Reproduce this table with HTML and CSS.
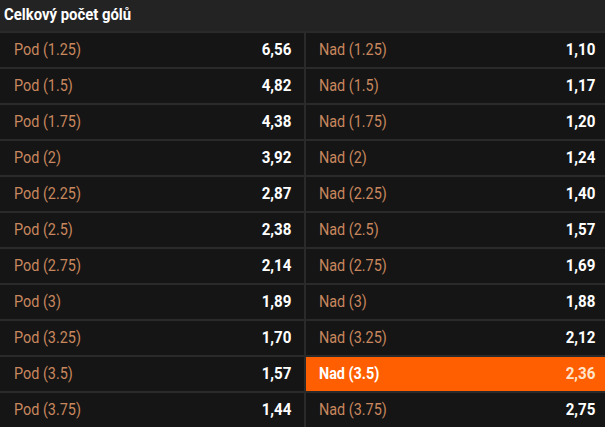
FILE: index.html
```html
<!DOCTYPE html>
<html>
<head>
<meta charset="utf-8">
<link rel="stylesheet" href="styles.css">
</head>
<body>
<div class="market">
  <div class="market-head"><span class="title">Celkový počet gólů</span></div>
  <div class="grid">
    <div class="cell"><span class="label">Pod (1.25)</span><span class="odds">6,56</span></div>
    <div class="cell"><span class="label">Nad (1.25)</span><span class="odds">1,10</span></div>
    <div class="cell"><span class="label">Pod (1.5)</span><span class="odds">4,82</span></div>
    <div class="cell"><span class="label">Nad (1.5)</span><span class="odds">1,17</span></div>
    <div class="cell"><span class="label">Pod (1.75)</span><span class="odds">4,38</span></div>
    <div class="cell"><span class="label">Nad (1.75)</span><span class="odds">1,20</span></div>
    <div class="cell"><span class="label">Pod (2)</span><span class="odds">3,92</span></div>
    <div class="cell"><span class="label">Nad (2)</span><span class="odds">1,24</span></div>
    <div class="cell"><span class="label">Pod (2.25)</span><span class="odds">2,87</span></div>
    <div class="cell"><span class="label">Nad (2.25)</span><span class="odds">1,40</span></div>
    <div class="cell"><span class="label">Pod (2.5)</span><span class="odds">2,38</span></div>
    <div class="cell"><span class="label">Nad (2.5)</span><span class="odds">1,57</span></div>
    <div class="cell"><span class="label">Pod (2.75)</span><span class="odds">2,14</span></div>
    <div class="cell"><span class="label">Nad (2.75)</span><span class="odds">1,69</span></div>
    <div class="cell"><span class="label">Pod (3)</span><span class="odds">1,89</span></div>
    <div class="cell"><span class="label">Nad (3)</span><span class="odds">1,88</span></div>
    <div class="cell"><span class="label">Pod (3.25)</span><span class="odds">1,70</span></div>
    <div class="cell"><span class="label">Nad (3.25)</span><span class="odds">2,12</span></div>
    <div class="cell"><span class="label">Pod (3.5)</span><span class="odds">1,57</span></div>
    <div class="cell selected"><span class="label">Nad (3.5)</span><span class="odds">2,36</span></div>
    <div class="cell"><span class="label">Pod (3.75)</span><span class="odds">1,44</span></div>
    <div class="cell"><span class="label">Nad (3.75)</span><span class="odds">2,75</span></div>
  </div>
</div>
</body>
</html>
```
FILE: styles.css
```css
html, body {
  margin: 0;
  padding: 0;
  background: #2a2a2a;
}
body {
  font-family: Roboto, "Liberation Sans", sans-serif;
  width: 605px;
  height: 427px;
  overflow: hidden;
}
.market-head {
  height: 31px;
  background: #232323;
  color: #ffffff;
  font-weight: bold;
  font-size: 16px;
  padding-left: 4px;
  line-height: 30px;
  margin-bottom: 2px;
}
.title {
  display: inline-block;
  transform: scaleX(0.93);
  transform-origin: left center;
}
.grid {
  display: grid;
  grid-template-columns: 304px 299px;
  column-gap: 2px;
  row-gap: 2px;
  grid-auto-rows: 34px;
}
.cell {
  background: #151515;
  display: flex;
  align-items: center;
  justify-content: space-between;
  padding: 0 13px 2px 14px;
  font-size: 16px;
}
.cell:nth-child(2n) {
  padding: 0 10px 2px 13px;
}
.label {
  color: #c8875e;
  display: inline-block;
  transform: scaleX(0.9);
  transform-origin: left center;
}
.odds {
  color: #ffffff;
  font-weight: bold;
  font-size: 17px;
  display: inline-block;
  transform: scaleX(0.89);
  transform-origin: right center;
}
.cell.selected {
  background: #ff5f00;
}
.cell.selected .label {
  color: #ffffff;
  font-weight: bold;
}
.cell.selected .odds {
  color: #ffe4cc;
}
```
